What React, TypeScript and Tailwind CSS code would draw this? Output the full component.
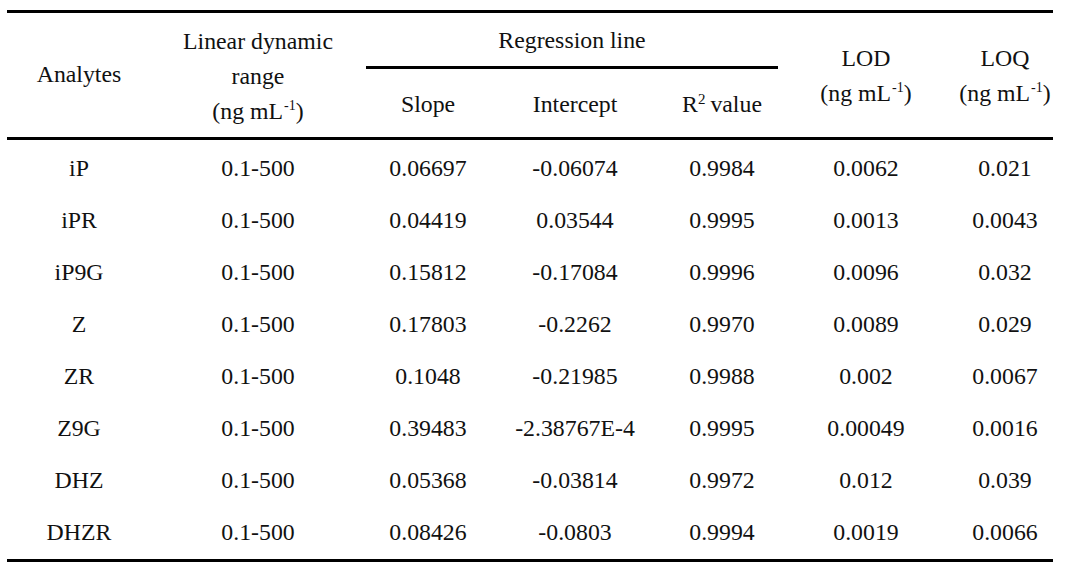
import React from "react";

const rows = [
  ["iP", "0.1-500", "0.06697", "-0.06074", "0.9984", "0.0062", "0.021"],
  ["iPR", "0.1-500", "0.04419", "0.03544", "0.9995", "0.0013", "0.0043"],
  ["iP9G", "0.1-500", "0.15812", "-0.17084", "0.9996", "0.0096", "0.032"],
  ["Z", "0.1-500", "0.17803", "-0.2262", "0.9970", "0.0089", "0.029"],
  ["ZR", "0.1-500", "0.1048", "-0.21985", "0.9988", "0.002", "0.0067"],
  ["Z9G", "0.1-500", "0.39483", "-2.38767E-4", "0.9995", "0.00049", "0.0016"],
  ["DHZ", "0.1-500", "0.05368", "-0.03814", "0.9972", "0.012", "0.039"],
  ["DHZR", "0.1-500", "0.08426", "-0.0803", "0.9994", "0.0019", "0.0066"],
];

const cols = "grid grid-cols-[144px_214px_126px_168px_126px_162px_106px]";

function Unit() {
  return (
    <span>
      (ng mL<sup className="text-[14px] leading-none relative top-[-9px] ml-[1px]">-1</sup>)
    </span>
  );
}

export default function App() {
  return (
    <div className="w-[1080px] h-[571px] bg-white pt-[10px] px-[7px] text-[#111] text-[23.8px] font-['Liberation_Serif','Times_New_Roman',serif]">
      <div className="w-[1046px] border-t-[3px] border-b-[3px] border-black">
        <div className={`${cols} grid-rows-[56px_68px] border-b-[3px] border-black`}>
          <div className="row-span-2 flex items-center justify-center">Analytes</div>
          <div className="row-span-2 flex flex-col items-center justify-center leading-[35px] pt-[2px]">
            <span>Linear dynamic</span>
            <span>range</span>
            <Unit />
          </div>
          <div className="col-span-3 flex items-center justify-center border-b-[3px] border-black ml-[1px] mr-[7px] pt-[2px]">
            Regression line
          </div>
          <div className="row-span-2 flex flex-col items-center justify-center leading-[35px] pt-[1px]">
            <span>LOD</span>
            <Unit />
          </div>
          <div className="row-span-2 flex flex-col items-center justify-center leading-[35px] pt-[1px] pl-[10px]">
            <span>LOQ</span>
            <Unit />
          </div>
          <div className="flex items-center justify-center pt-[3px]">Slope</div>
          <div className="flex items-center justify-center pt-[3px]">Intercept</div>
          <div className="flex items-center justify-center pt-[3px]">
            <span>
              R<sup className="text-[15px] leading-none relative top-[-8px] mr-[5px]">2</sup>value
            </span>
          </div>
        </div>
        <div className="pt-[3px]">
          {rows.map((r) => (
            <div key={r[0]} className={`${cols} h-[52px]`}>
              {r.map((c, i) => (
                <div key={i} className={`flex items-center justify-center ${i === 6 ? "pl-[10px]" : ""}`}>
                  {c}
                </div>
              ))}
            </div>
          ))}
        </div>
      </div>
    </div>
  );
}
